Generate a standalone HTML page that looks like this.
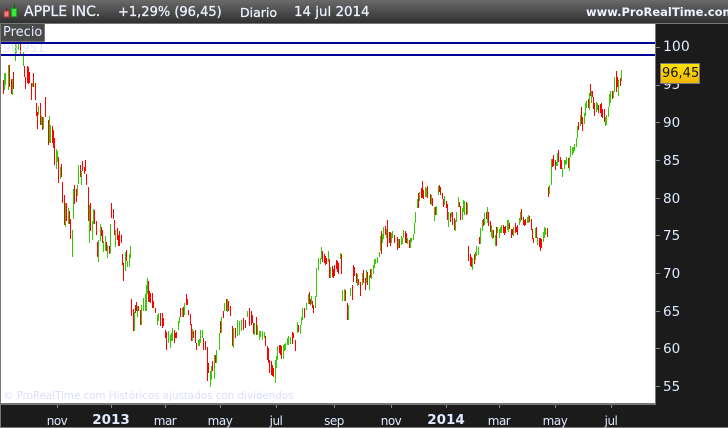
<!DOCTYPE html>
<html><head><meta charset="utf-8"><title>APPLE INC.</title>
<style>
html,body{margin:0;padding:0;background:#1b1b1b}
#c{position:relative;width:728px;height:428px;overflow:hidden;background:#1b1b1b;font-family:"DejaVu Sans","Liberation Sans",sans-serif;color:#e6eeff}
#c span,#c div{position:absolute;white-space:nowrap}
.h{top:4px;font-size:13px;line-height:17px;color:#eef3ff;-webkit-text-stroke:.25px #eef3ff}
.y{left:663px;font-size:13.5px;line-height:16px;color:#dfeaff}
.x{top:413px;font-size:12px;letter-spacing:-.5px;line-height:16px;width:50px;text-align:center;color:#dfeaff}
.b{font-size:13.5px;letter-spacing:0;font-weight:bold;top:411px;line-height:18px}
</style></head><body><div id="c">
<div style="left:0;top:0;width:728px;height:23px;background:linear-gradient(#6a6a6a,#303030)"></div>
<div style="left:0;top:23px;width:728px;height:1px;background:#777"></div>
<div style="left:1px;top:24px;width:654px;height:379px;background:#fff"></div>
<div style="left:0;top:24px;width:1px;height:404px;background:#777"></div>
<div style="left:655px;top:24px;width:1px;height:381px;background:#777"></div>
<div style="left:1px;top:403px;width:655px;height:2px;background:#777"></div>
<div style="left:0;top:427px;width:728px;height:1px;background:#777"></div>

<svg style="position:absolute;left:0;top:0" width="728" height="428" shape-rendering="crispEdges">
<path fill="none" stroke="#ff0000" stroke-width="1" d="M3.5 80V94M9.5 65V87M11.5 79V94M13.5 72V89M20.5 40V54M24.5 66V77M25.5 77V89M27.5 66V83M28.5 67V84M29.5 72V83M31.5 83V100M33.5 73V87M35.5 83V100M36.5 103V116M37.5 112V129M40.5 103V125M42.5 117V130M45.5 97V117M48.5 120V145M52.5 126V143M53.5 130V148M54.5 138V165M58.5 157V183M61.5 164V177M62.5 182V203M64.5 195V225M66.5 203V221M69.5 211V224M70.5 219V239M74.5 185V204M76.5 189V202M80.5 165V177M82.5 161V171M84.5 167V174M85.5 160V171M86.5 174V185M88.5 187V221M90.5 203V231M94.5 210V224M96.5 221V235M97.5 242V257M101.5 227V236M102.5 230V243M106.5 242V251M109.5 246V254M111.5 203V218M113.5 209V219M114.5 220V235M117.5 228V240M118.5 235V246M119.5 231V246M121.5 235V243M122.5 254V265M123.5 263V281M126.5 250V261
M131.5 299V316M133.5 309V331M135.5 305V313M136.5 302V311M138.5 306V311M140.5 310V325M148.5 281V302M149.5 291V302M150.5 293V303M152.5 293V308M153.5 301V308M155.5 308V313M160.5 313V326M162.5 313V328M163.5 318V326M165.5 330V338M166.5 332V350M174.5 330V343M175.5 333V338M176.5 332V338M180.5 308V317M183.5 307V317M186.5 294V305M187.5 299V305M188.5 310V315M190.5 314V325M191.5 324V341M193.5 331V338M195.5 330V343M196.5 343V350M203.5 338V350M205.5 341V350M207.5 347V381M208.5 363V373M212.5 361V371M215.5 355V363M220.5 321V333M223.5 311V318M226.5 299V311M228.5 301V311M230.5 306V316M232.5 326V346M235.5 328V338
M243.5 318V330M245.5 320V328M249.5 308V326M251.5 311V325M252.5 315V323M253.5 323V334M256.5 317V335M265.5 336V346M267.5 346V360M268.5 348V363M269.5 360V373M271.5 361V375M272.5 365V376M273.5 368V377M279.5 345V353M280.5 345V355M281.5 346V359M292.5 332V344M293.5 333V338M295.5 340V351M298.5 325V332M304.5 308V318M309.5 292V304M310.5 299V305M312.5 301V308M313.5 305V313
M322.5 251V262M324.5 254V263M325.5 256V265M326.5 258V264M329.5 259V278M332.5 266V277M333.5 269V278M334.5 265V276M336.5 260V269M337.5 261V272M338.5 263V274M341.5 254V274M345.5 290V301M347.5 303V320M352.5 285V300M353.5 265V282M354.5 267V276M356.5 273V283M358.5 279V285M360.5 282V296M363.5 270V283M365.5 278V290M367.5 272V285M370.5 269V278
M381.5 231V254M385.5 226V235M387.5 220V247M389.5 232V243M390.5 232V246M394.5 235V243M397.5 237V250M399.5 239V248
M405.5 231V243M406.5 233V243M409.5 240V248M418.5 193V208M421.5 188V198M422.5 181V198M423.5 190V199M427.5 186V198M430.5 194V204M432.5 198V206M435.5 207V215M439.5 185V192M440.5 187V195M442.5 193V199M443.5 199V207M446.5 201V208M447.5 204V220M450.5 213V222M452.5 212V225M454.5 218V230M459.5 202V207M460.5 206V220M466.5 202V215
M468.5 246V261M470.5 254V266M471.5 257V267M474.5 254V264M479.5 237V244M483.5 219V226M486.5 212V219M488.5 212V226M490.5 221V232M493.5 230V238M496.5 227V246M503.5 225V233M504.5 227V235M505.5 226V233M509.5 223V229M511.5 229V238M512.5 229V235M515.5 223V233M516.5 227V232M517.5 225V235M521.5 209V220M523.5 217V225M524.5 220V226M525.5 219V225M529.5 216V222M531.5 219V230M532.5 229V239M533.5 238V243M536.5 227V238M539.5 238V247M540.5 238V251M541.5 239V248M547.5 228V237
M548.5 187V197M552.5 159V167M553.5 155V166M555.5 160V170M558.5 150V162M560.5 157V169M561.5 160V169M568.5 158V168M578.5 122V130M581.5 107V124M582.5 117V131M588.5 99V108M590.5 84V96M592.5 91V97M593.5 97V109M594.5 103V116M598.5 105V113M600.5 104V113M601.5 103V117M602.5 109V118M604.5 109V122M612.5 91V99M616.5 71V92M617.5 77V87M620.5 78V86"/>
<path fill="none" stroke="#33cc00" stroke-width="1" d="M4.5 73V90M5.5 73V85M8.5 65V90M12.5 79V95M15.5 43V61M16.5 43V53M18.5 41V50M23.5 52V66M32.5 83V87M38.5 106V115M41.5 116V125M43.5 117V129M49.5 116V143M50.5 125V143M56.5 149V169M57.5 151V162M60.5 167V179M65.5 203V227M68.5 208V224M72.5 230V257M73.5 189V219M77.5 185V196M78.5 165V184M81.5 171V185M89.5 205V243M92.5 221V240M93.5 209V224M98.5 240V262M100.5 224V241M103.5 241V252M105.5 236V251M107.5 245V258M110.5 224V253M115.5 230V247M125.5 252V271M127.5 261V267M129.5 254V267M130.5 246V258
M134.5 312V331M137.5 306V317M141.5 305V325M143.5 298V311M145.5 294V311M146.5 285V311M147.5 278V294M157.5 315V325M158.5 313V321M168.5 331V343M170.5 335V348M171.5 333V341M172.5 328V341M178.5 321V330M179.5 317V323M182.5 308V317M184.5 303V315M192.5 329V341M198.5 340V346M199.5 339V346M200.5 330V343M202.5 330V338M210.5 371V387M211.5 366V380M214.5 355V379M216.5 350V363M219.5 333V350M221.5 317V333M224.5 303V311M227.5 299V312M233.5 328V348M237.5 320V336M239.5 321V335
M241.5 320V331M247.5 311V317M254.5 323V335M257.5 325V335M259.5 331V340M260.5 331V337M262.5 331V340M264.5 332V338M275.5 360V383M276.5 356V368M277.5 346V360M283.5 345V359M284.5 344V351M285.5 343V350M287.5 338V345M288.5 336V345M290.5 337V344M297.5 322V333M300.5 325V334M301.5 317V325M302.5 308V320M306.5 303V310M308.5 294V304M311.5 296V304M315.5 296V308
M316.5 268V297M318.5 258V270M320.5 258V264M321.5 247V259M328.5 251V262M330.5 267V278M340.5 253V259M342.5 290V301M344.5 289V301M348.5 305V320M350.5 288V296M357.5 274V286M362.5 273V285M366.5 270V283M369.5 275V290M371.5 269V279M373.5 265V274M374.5 259V268M375.5 259V264M377.5 257V263M379.5 252V257M380.5 236V251M382.5 234V243M383.5 227V239M386.5 229V238M391.5 233V243M392.5 231V238M398.5 239V248
M401.5 236V245M402.5 238V244M403.5 230V238M407.5 238V244M410.5 238V248M411.5 238V242M413.5 234V240M414.5 223V234M415.5 212V223M417.5 199V208M419.5 192V201M425.5 187V197M426.5 188V197M431.5 195V205M434.5 207V221M436.5 206V215M438.5 186V195M444.5 196V205M448.5 212V227M451.5 212V217M455.5 220V231M456.5 212V222M458.5 197V207M462.5 208V220M463.5 200V212M464.5 201V215M467.5 203V214
M472.5 258V270M475.5 252V260M476.5 246V256M478.5 247V255M480.5 228V244M482.5 220V231M484.5 213V225M487.5 207V223M491.5 225V237M492.5 230V239M495.5 235V246M497.5 227V233M499.5 229V238M500.5 227V233M501.5 225V233M507.5 220V230M508.5 220V232M513.5 227V236M519.5 218V225M520.5 212V222M527.5 217V223M528.5 215V223M535.5 228V238M537.5 237V245M543.5 232V242M544.5 227V238M545.5 228V235
M549.5 185V194M551.5 159V185M556.5 162V166M557.5 153V166M562.5 168V177M564.5 160V169M565.5 160V165M566.5 157V164M569.5 157V171M570.5 146V157M572.5 147V155M573.5 147V153M574.5 144V151M576.5 138V147M577.5 126V138M580.5 115V126M584.5 113V124M585.5 103V116M586.5 101V108M589.5 93V110M591.5 91V103M596.5 102V112M597.5 103V110M605.5 117V126M606.5 115V125M608.5 107V117M609.5 94V107M610.5 91V103M613.5 91V98M614.5 77V92M618.5 80V96M621.5 70V81"/>
<text x="3" y="52" font-family="DejaVu Sans, sans-serif" font-size="12" fill="#dcdcff" fill-opacity=".8">98,951</text>
<rect x="1" y="42" width="654" height="2" fill="#000099"/>
<rect x="1" y="54" width="654" height="2" fill="#000099"/>
<path fill="none" stroke="#888" d="M656 47.5H660M656 85.5H660M656 122.5H660M656 160.5H660M656 198.5H660M656 235.5H660M656 273.5H660M656 311.5H660M656 348.5H660M656 386.5H660"/>
<path fill="none" stroke="#888" d="M57.5 405V408M111.5 405V408M165.5 405V408M220.5 405V408M276.5 405V408M334.5 405V408M391.5 405V408M446.5 405V408M499.5 405V408M555.5 405V408M611.5 405V408"/>
<path fill="none" stroke="#7a1515" d="M6.5 8V20"/>
<rect x="4" y="11" width="5" height="6" fill="#f58080" stroke="#a33"/>
<path fill="none" stroke="#0a6a0a" d="M14.5 4V20"/>
<rect x="11.5" y="8.5" width="5" height="8" fill="#33ee33" stroke="#2a9a2a"/>
</svg>

<span class="h" style="left:24px;font-size:14px">APPLE INC.</span>
<span class="h" style="left:118px">+1,29% (96,45)</span>
<span class="h" style="left:240px;font-size:12.5px">Diario</span>
<span class="h" style="left:294px;font-size:13.4px">14 jul 2014</span>
<span class="h" style="left:586px;font-size:11.5px;font-weight:bold;-webkit-text-stroke:0">www.ProRealTime.com</span>

<div style="left:1px;top:24px;width:43px;height:17px;background:#4a4a4a;border-right:1px solid #777;border-bottom:1px solid #777"></div>
<span style="left:3px;top:25px;font-size:13px;line-height:16px;color:#e6eeff">Precio</span>

<span style="left:3px;top:389px;font-size:10.3px;line-height:15px;color:#dcdcff">© ProRealTime.com  Históricos ajustados con dividendos</span>

<span class="y" style="top:39px;font-size:14px">100</span>
<span class="y" style="top:77px">95</span>
<span class="y" style="top:115px">90</span>
<span class="y" style="top:153px">85</span>
<span class="y" style="top:191px">80</span>
<span class="y" style="top:228px">75</span>
<span class="y" style="top:266px">70</span>
<span class="y" style="top:304px">65</span>
<span class="y" style="top:341px">60</span>
<span class="y" style="top:379px">55</span>

<div style="left:660px;top:63px;width:38px;height:19px;background:linear-gradient(#ffe400,#eeb400);border:1px solid #777"></div>
<span style="left:662px;top:65px;font-size:13px;line-height:17px;color:#111">96,45</span>

<span class="x" style="left:32px">nov</span>
<span class="x b" style="left:86px">2013</span>
<span class="x" style="left:140px">mar</span>
<span class="x" style="left:195px">may</span>
<span class="x" style="left:251px">jul</span>
<span class="x" style="left:309px">sep</span>
<span class="x" style="left:366px">nov</span>
<span class="x b" style="left:421px">2014</span>
<span class="x" style="left:474px">mar</span>
<span class="x" style="left:530px">may</span>
<span class="x" style="left:586px">jul</span>
</div></body></html>
